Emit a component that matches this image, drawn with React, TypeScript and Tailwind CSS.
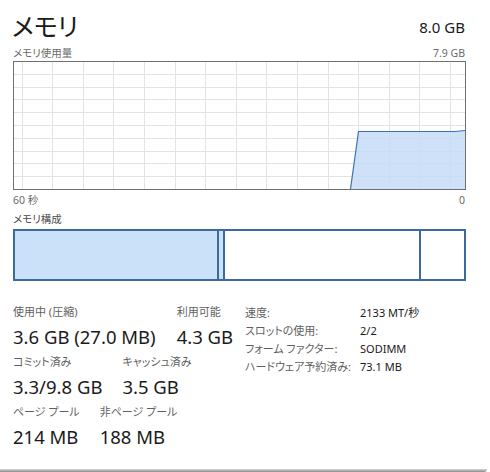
import React from "react";

function Chart() {
  const vx: number[] = [];
  for (let i = 0; i < 15; i++) vx.push(8.5 + i * 30.6);
  const hy: number[] = [];
  for (let i = 1; i < 10; i++) hy.push(i * 12.8);
  return (
    <svg width="453" height="129" className="block">
      {vx.map((x, i) => (
        <line key={"v" + i} x1={Math.round(x) + 0.5} y1={0} x2={Math.round(x) + 0.5} y2={129} stroke="#e3e3e3" strokeWidth="1" />
      ))}
      {hy.map((y, i) => (
        <line key={"h" + i} x1={0} y1={Math.round(y) + 0.5} x2={453} y2={Math.round(y) + 0.5} stroke="#e3e3e3" strokeWidth="1" />
      ))}
      <polygon points="337.5,128 345.5,70.5 442,70.5 452,69.5 452,128" fill="#c5dcf8" fillOpacity="0.85" />
      <polyline points="337.5,128 345.5,70.5 442,70.5 452,69.5" fill="none" stroke="#3a73b5" strokeWidth="1.2" />
      <rect x="0.5" y="0.5" width="452" height="128" fill="none" stroke="#6f6f6f" strokeWidth="1" />
    </svg>
  );
}

function Stat({ label, value }: { label: string; value: string }) {
  return (
    <div>
      <div className="text-[11px] leading-[14px] text-[#5f5f5f]">{label}</div>
      <div className="mt-[6px] text-[18.5px] leading-[24px]">{value}</div>
    </div>
  );
}

export default function App() {
  return (
    <div className="relative w-[490px] h-[472px] bg-white overflow-hidden text-[#1a1a1a] font-['Noto_Sans','Noto_Sans_CJK_JP',sans-serif] [font-feature-settings:'palt']">
      <div className="pl-[12px] pr-[25px]">
        <div className="flex justify-between items-end h-[42px]">
          <div className="text-[25px] leading-none pb-[3px]">メモリ</div>
          <div className="text-[15px] leading-none pb-[7px]">8.0 GB</div>
        </div>
        <div className="flex justify-between items-end h-[19px] pl-[1px] text-[10.5px] text-[#6a6a6a] leading-none pb-[3px]">
          <span>メモリ使用量</span>
          <span>7.9 GB</span>
        </div>
        <div className="pl-[1px]">
          <Chart />
        </div>
        <div className="flex justify-between pl-[1px] h-[20px] items-center text-[10.5px] text-[#6a6a6a] leading-none">
          <span>60 秒</span>
          <span>0</span>
        </div>
        <div className="pl-[1px] h-[19px] flex items-center text-[10.5px] text-[#4a4a4a] leading-none">メモリ構成</div>
        <div className="ml-[1px] flex h-[52px] w-[453px] border-2 border-[#3a6b9c]">
          <div className="w-[202px] bg-[#cbe0f9]" />
          <div className="w-[6px] bg-[#cbe0f9] border-l-2 border-[#3a6b9c]" />
          <div className="w-[196px] bg-white border-l-2 border-[#3a6b9c]" />
          <div className="flex-1 bg-white border-l-2 border-[#3a6b9c]" />
        </div>
        <div className="flex items-start mt-[24px] pl-[1px]">
          <div className="w-[232px] flex flex-col gap-[6px]">
            <div className="flex gap-[21px]">
              <Stat label="使用中 (圧縮)" value="3.6 GB (27.0 MB)" />
              <Stat label="利用可能" value="4.3 GB" />
            </div>
            <div className="flex gap-[20px]">
              <Stat label="コミット済み" value="3.3/9.8 GB" />
              <Stat label="キャッシュ済み" value="3.5 GB" />
            </div>
            <div className="flex gap-[20px]">
              <Stat label="ページ プール" value="214 MB" />
              <Stat label="非ページ プール" value="188 MB" />
            </div>
          </div>
          <div className="grid grid-cols-[115px_1fr] content-start text-[11px] leading-[18px] -mt-[1px]">
            <span className="text-[#5f5f5f]">速度:</span>
            <span>2133 MT/秒</span>
            <span className="text-[#5f5f5f]">スロットの使用:</span>
            <span>2/2</span>
            <span className="text-[#5f5f5f]">フォーム ファクター:</span>
            <span>SODIMM</span>
            <span className="text-[#5f5f5f]">ハードウェア予約済み:</span>
            <span>73.1 MB</span>
          </div>
        </div>
      </div>
      <div className="absolute left-0 right-[3px] bottom-0 h-[3px] bg-gradient-to-b from-[#d8d8d8] to-[#8a8a8a] rounded-br-[6px]" />
    </div>
  );
}
